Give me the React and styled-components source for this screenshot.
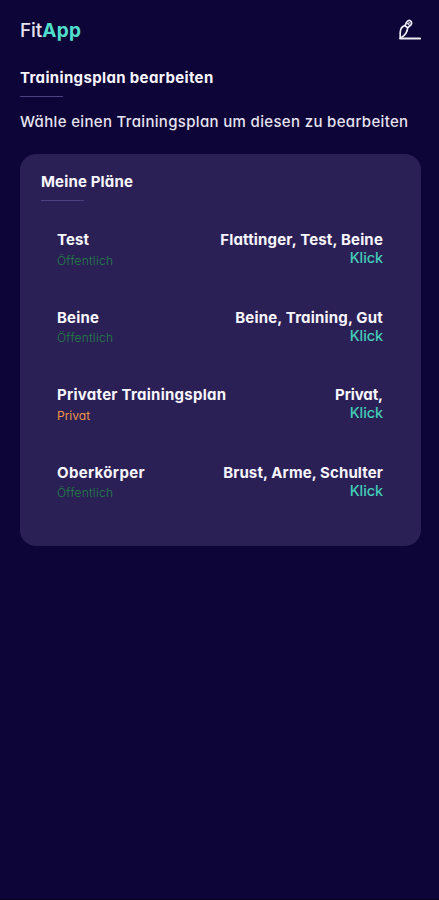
import React from 'react';
import styled, { createGlobalStyle } from 'styled-components';

const GlobalStyle = createGlobalStyle`
  * { box-sizing: border-box; }
  body {
    margin: 0;
    background: #0d0437;
    color: #f8f6fc;
    font-family: Inter, 'Open Sans', sans-serif;
    font-feature-settings: 'cv11';
  }
`;

const Page = styled.main`
  min-height: 900px;
  padding: 0 18.5px 0 20px;
  border-bottom: 1px solid #06021c;
`;

const Header = styled.header`
  display: flex;
  align-items: center;
  justify-content: space-between;
  height: 61px;
`;

const Logo = styled.div`
  font-size: 19px;
  font-weight: 500;
  line-height: 61px;
  letter-spacing: -0.1px;
  color: #e6e3ef;
`;

const LogoAccent = styled.span`
  font-weight: 700;
  letter-spacing: 0.4px;
  color: #50dfcc;
`;

const EditButton = styled.button`
  display: flex;
  padding: 0 0 1px;
  border: 0;
  background: none;
  color: #edebf4;
`;

const Heading = styled.h2`
  margin: 0;
  font-size: 15px;
  font-weight: 700;
  line-height: 20px;
  letter-spacing: ${(p) => p.$tracking}px;
  white-space: nowrap;
`;

const PageHeading = styled(Heading)`
  margin-top: 7px;
`;

const Rule = styled.div`
  width: 43px;
  height: 1px;
  margin-top: 8px;
  background: #4a4180;
`;

const Intro = styled.p`
  margin: 15px 0 0;
  font-size: 15px;
  font-weight: 500;
  line-height: 20px;
  letter-spacing: 0.33px;
  white-space: nowrap;
  color: #e6e3f0;
`;

const Card = styled.section`
  height: 392.5px;
  margin-top: 21.5px;
  padding: 18.5px 37.5px 0 21px;
  border-radius: 16px;
  background: #2b2056;
`;

const PlanList = styled.ul`
  display: grid;
  grid-auto-rows: 77.6px;
  margin: 29px 0 0;
  padding: 0 0 0 16px;
  list-style: none;
`;

const PlanRow = styled.li`
  display: flex;
  justify-content: space-between;
`;

const PlanName = styled.div`
  font-size: 15px;
  font-weight: 700;
  line-height: 20px;
  letter-spacing: ${(p) => p.$tracking}px;
  white-space: nowrap;
`;

const Visibility = styled.div`
  margin-top: 2.5px;
  font-size: 12px;
  font-weight: ${(p) => (p.$private ? 400 : 300)};
  line-height: 16px;
  letter-spacing: ${(p) => (p.$private ? 0 : 0.25)}px;
  color: ${(p) => (p.$private ? '#ee9448' : '#1f8044')};
`;

const PlanDetails = styled.div`
  display: flex;
  flex-direction: column;
  align-items: flex-end;
  padding-top: 1px;
`;

const Tags = styled.div`
  font-size: 15px;
  font-weight: 700;
  line-height: 18px;
  letter-spacing: ${(p) => p.$tracking}px;
  white-space: nowrap;
`;

const OpenLink = styled.a`
  font-size: 14.5px;
  font-weight: 500;
  line-height: 18px;
  letter-spacing: -0.1px;
  color: #42cdb8;
`;

const plans = [
  { name: 'Test', tags: 'Flattinger, Test, Beine', nameTracking: 0.1, tagTracking: 0.17 },
  { name: 'Beine', tags: 'Beine, Training, Gut', nameTracking: 0.2, tagTracking: 0.18 },
  { name: 'Privater Trainingsplan', tags: 'Privat,', isPrivate: true, nameTracking: 0.27, tagTracking: -0.1 },
  { name: 'Oberkörper', tags: 'Brust, Arme, Schulter', nameTracking: 0.33, tagTracking: 0.11 },
];

function PenIcon() {
  return (
    <svg width="22" height="22" viewBox="0 0 22 22" fill="none" stroke="currentColor" strokeWidth="1.7" strokeLinejoin="round" strokeLinecap="round">
      <path d="M1.2 19.2V13.2C1.4 10 3.2 7.4 5.8 6.6L8.6 8.7C8.6 12.6 6.8 15.8 1.6 19.2" />
      <path d="M6.3 6.2L7.4 3.7C8.2 1.7 9.9 1 11.3 1.8C12.7 2.6 13 4.4 12 5.8L8.8 8.7" />
      <path d="M8 4.4L11.2 6.6M9.4 4.1L11 3.8" strokeWidth="1.1" />
      <path d="M1.2 19.5H21" strokeWidth="2.2" />
    </svg>
  );
}

export default function App() {
  return (
    <>
      <GlobalStyle />
      <Page>
        <Header>
          <Logo>Fit<LogoAccent>App</LogoAccent></Logo>
          <EditButton aria-label="Bearbeiten"><PenIcon /></EditButton>
        </Header>
        <PageHeading $tracking={0.35}>Trainingsplan bearbeiten</PageHeading>
        <Rule />
        <Intro>Wähle einen Trainingsplan um diesen zu bearbeiten</Intro>
        <Card>
          <Heading $tracking={0.15}>Meine Pläne</Heading>
          <Rule />
          <PlanList>
            {plans.map((plan) => (
              <PlanRow key={plan.name}>
                <div>
                  <PlanName $tracking={plan.nameTracking}>{plan.name}</PlanName>
                  <Visibility $private={plan.isPrivate}>{plan.isPrivate ? 'Privat' : 'Öffentlich'}</Visibility>
                </div>
                <PlanDetails>
                  <Tags $tracking={plan.tagTracking}>{plan.tags}</Tags>
                  <OpenLink>Klick</OpenLink>
                </PlanDetails>
              </PlanRow>
            ))}
          </PlanList>
        </Card>
      </Page>
    </>
  );
}
